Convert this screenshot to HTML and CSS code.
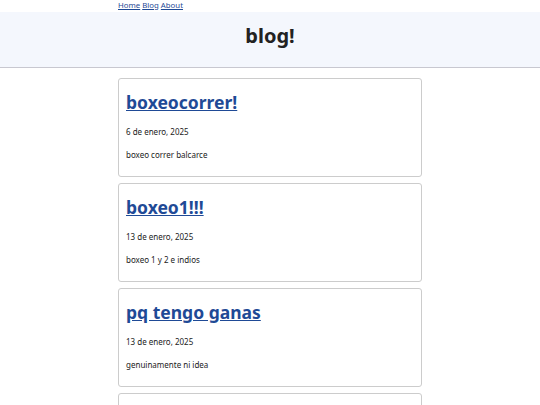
FILE: index.html
```html
<!DOCTYPE html>
<html lang="es">
<head>
<meta charset="utf-8">
<title>blog!</title>
<link rel="stylesheet" href="styles.css">
</head>
<body>
<nav class="nav">
  <a href="#">Home</a> <a href="#">Blog</a> <a href="#">About</a>
</nav>
<header class="band">
  <h1 class="band-title">blog!</h1>
</header>
<main class="posts">
  <article class="card">
    <h2 class="card-title"><a href="#">boxeocorrer!</a></h2>
    <p class="card-date">6 de enero, 2025</p>
    <p class="card-text">boxeo correr balcarce</p>
  </article>
  <article class="card">
    <h2 class="card-title"><a href="#">boxeo1!!!</a></h2>
    <p class="card-date">13 de enero, 2025</p>
    <p class="card-text">boxeo 1 y 2 e indios</p>
  </article>
  <article class="card">
    <h2 class="card-title"><a href="#">pq tengo ganas</a></h2>
    <p class="card-date">13 de enero, 2025</p>
    <p class="card-text">genuinamente ni idea</p>
  </article>
  <article class="card card-empty"></article>
</main>
</body>
</html>
```

FILE: styles.css
```css
html, body {
  margin: 0;
  padding: 0;
  background: #ffffff;
  color: #222222;
  font-family: "Noto Sans", "Open Sans", sans-serif;
}

.nav {
  width: 304px;
  margin: 0 auto;
  font-size: 7.8px;
  line-height: 11px;
  padding: 0 0 1px;
}

.nav a {
  color: #1f4a96;
}

.band {
  background: #f4f7fd;
  border-bottom: 1px solid #c8c8d0;
  padding: 10px 0 18px;
}

.band-title {
  margin: 0;
  text-align: center;
  font-size: 20px;
  line-height: 27px;
  font-weight: 700;
  color: #222222;
}

.posts {
  width: 304px;
  margin: 10px auto 0;
  display: flex;
  flex-direction: column;
  gap: 6px;
}

.card {
  border: 1px solid #cccccc;
  border-radius: 3px;
  padding: 0 7px 5px;
}

.card-empty {
  min-height: 80px;
}

.card-title {
  margin: 11px 0 12px;
  font-size: 17.5px;
  line-height: 24px;
  font-weight: 700;
}

.card-title a {
  color: #1f4a96;
}

.card-date {
  margin: 0 0 12px;
  font-size: 8px;
  line-height: 11px;
}

.card-text {
  margin: 0 0 11px;
  font-size: 8px;
  line-height: 11px;
}
```
